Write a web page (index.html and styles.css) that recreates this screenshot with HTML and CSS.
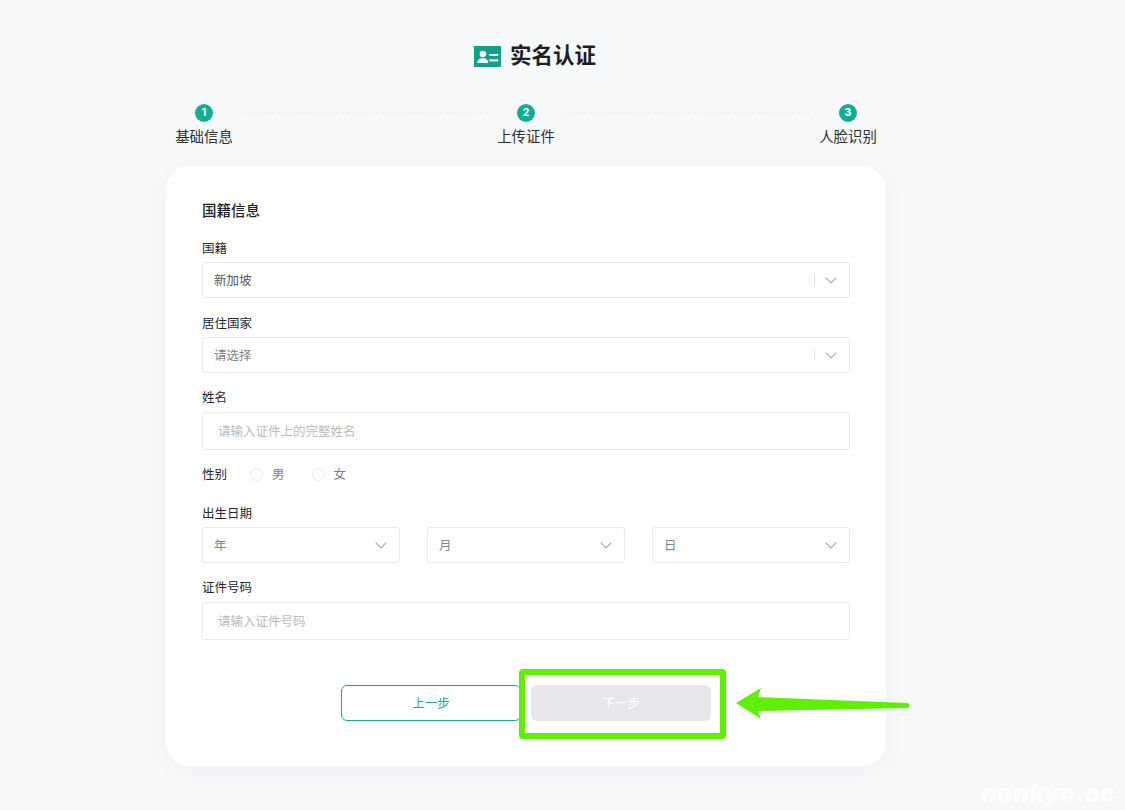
FILE: index.html
```html
<!DOCTYPE html>
<html lang="zh-CN">
<head>
<meta charset="utf-8">
<title>实名认证</title>
<link rel="stylesheet" href="styles.css">
</head>
<body>
<main class="page">
  <header class="heading">
    <svg class="heading-icon" viewBox="0 0 27 21" aria-hidden="true">
      <rect width="27" height="21" fill="#12a08c"/>
      <circle cx="8.8" cy="8" r="3.2" fill="#fff"/>
      <path d="M3.4 17c0-3.2 2.3-4.7 5.4-4.7s5.4 1.5 5.4 4.7z" fill="#fff"/>
      <rect x="15.4" y="8" width="8.8" height="2" fill="#fff"/>
      <rect x="15.4" y="13.4" width="8.8" height="2" fill="#fff"/>
    </svg>
    <h1 class="heading-text">实名认证</h1>
  </header>

  <ol class="steps">
    <li class="step"><span class="step-dot">1</span><span class="step-label">基础信息</span></li>
    <li class="step-line"></li>
    <li class="step"><span class="step-dot">2</span><span class="step-label">上传证件</span></li>
    <li class="step-line"></li>
    <li class="step"><span class="step-dot">3</span><span class="step-label">人脸识别</span></li>
  </ol>

  <section class="card">
    <h2 class="card-title">国籍信息</h2>

    <div class="field">
      <div class="label">国籍</div>
      <div class="control select"><span class="value">新加坡</span><span class="sep"></span><svg class="chev" viewBox="0 0 12 7"><path d="M.7.7 6 6 11.3.7"/></svg></div>
    </div>

    <div class="field field-s">
      <div class="label">居住国家</div>
      <div class="control select"><span class="value muted">请选择</span><span class="sep"></span><svg class="chev" viewBox="0 0 12 7"><path d="M.7.7 6 6 11.3.7"/></svg></div>
    </div>

    <div class="field field-m">
      <div class="label label-far">姓名</div>
      <div class="control input">请输入证件上的完整姓名</div>
    </div>

    <div class="gender">
      <span class="gender-label">性别</span>
      <span class="radio"></span><span class="radio-text">男</span>
      <span class="radio radio-2"></span><span class="radio-text">女</span>
    </div>

    <div class="field field-l">
      <div class="label">出生日期</div>
      <div class="dates">
        <div class="control select date"><span class="value muted">年</span><svg class="chev" viewBox="0 0 12 7"><path d="M.7.7 6 6 11.3.7"/></svg></div>
        <div class="control select date"><span class="value muted">月</span><svg class="chev" viewBox="0 0 12 7"><path d="M.7.7 6 6 11.3.7"/></svg></div>
        <div class="control select date"><span class="value muted">日</span><svg class="chev" viewBox="0 0 12 7"><path d="M.7.7 6 6 11.3.7"/></svg></div>
      </div>
    </div>

    <div class="field field-m">
      <div class="label label-far">证件号码</div>
      <div class="control input">请输入证件号码</div>
    </div>

    <div class="actions">
      <button class="btn btn-prev" type="button">上一步</button>
      <button class="btn btn-next" type="button">下一步</button>
    </div>
  </section>
</main>

<div class="mark-box"></div>
<svg class="mark-arrow" viewBox="0 0 175 32" aria-hidden="true">
  <path d="M0 15 25 0 22 9 171 15a2.5 2.5 0 0 1 0 5L22 23 25 31z" fill="#5ff000"/>
</svg>
<div class="watermark">nonkyc.cc</div>
</body>
</html>
```
FILE: styles.css
```css
* { box-sizing: border-box; }

html, body { margin: 0; padding: 0; height: 100%; }

body {
  background: #f7f8fa;
  color: #1f2329;
  font-family: "Noto Sans CJK SC", "Noto Sans", sans-serif;
  overflow: hidden;
  position: relative;
}

.page {
  width: 720px;
  margin-left: 166px;
  padding-top: 42px;
}

.heading {
  display: flex;
  align-items: center;
  justify-content: center;
  gap: 9px;
  height: 24px;
  margin-left: 18px;
}
.heading-icon { width: 27px; height: 21px; display: block; margin-top: 4px; }
.heading-text {
  margin: 0;
  font-size: 21.5px;
  line-height: 24px;
  font-weight: 700;
  color: #1c1f23;
}

.steps {
  list-style: none;
  margin: 38px 9px 0;
  padding: 0;
  display: flex;
  align-items: flex-start;
}
.step {
  display: flex;
  flex-direction: column;
  align-items: center;
  width: 58px;
  flex: none;
}
.step-dot {
  width: 18px;
  height: 18px;
  border-radius: 50%;
  background: #12ad93;
  color: #fff;
  font-family: "Inter", sans-serif;
  font-size: 10.5px;
  font-weight: 700;
  line-height: 18px;
  text-align: center;
}
.step-label {
  margin-top: 4px;
  font-size: 14.4px;
  line-height: 20px;
  white-space: nowrap;
  color: #2b2f36;
}
.step-line {
  flex: 1;
  margin: 9px 9px 0;
  border-top: 1px dashed #e9ebee;
}

.card {
  height: 600px;
  margin-top: 20px;
  padding: 34px 36px 0;
  background: #fff;
  border-radius: 24px;
  box-shadow: 0 6px 24px rgba(30, 40, 60, 0.03);
}
.card-title {
  margin: 0 0 18px;
  font-size: 14.5px;
  line-height: 20px;
  font-weight: 500;
  color: #1c1f23;
}

.field-s { margin-top: 15px; }
.field-m { margin-top: 14px; }
.field-l { margin-top: 19px; }

.label {
  font-size: 12.5px;
  line-height: 20px;
  margin-bottom: 4px;
  color: #24272c;
}
.label-far { margin-bottom: 5px; }

.control {
  display: flex;
  align-items: center;
  background: #fff;
  border: 1px solid #e7e9ec;
  border-radius: 3px;
  font-size: 12.5px;
}
.select { height: 36px; padding: 0 12px 0 11px; }
.input { height: 38px; padding: 0 15px 2px; color: #b9bcc2; }

.value { flex: 1; color: #555a61; padding-bottom: 2px; }
.value.muted { color: #7f838a; }

.sep { width: 1px; height: 12px; background: #e1e3e6; margin-right: 10px; }
.chev { width: 12px; height: 7px; display: block; fill: none; stroke: #a9adb3; stroke-width: 1.2; }

.gender {
  display: flex;
  align-items: center;
  height: 20px;
  margin-top: 14px;
  font-size: 12.5px;
  line-height: 20px;
}
.gender-label { width: 48px; color: #24272c; }
.radio {
  width: 13px;
  height: 13px;
  border: 1px solid #e7e9ec;
  border-radius: 50%;
  margin-right: 9px;
}
.radio-text { color: #7a7e85; }
.radio-2 { margin-left: 27px; }

.dates { display: grid; grid-template-columns: repeat(3, 198px); gap: 27px; }

.actions {
  display: flex;
  justify-content: center;
  gap: 10px;
  margin-top: 45px;
}
.btn {
  width: 180px;
  height: 36px;
  padding: 0 0 2px;
  border-radius: 6px;
  font: inherit;
  font-size: 12.5px;
}
.btn-prev { background: #fff; border: 1px solid #12ad93; color: #12ad93; }
.btn-next { background: #e6e7ea; border: 0; color: #fff; }

/* Annotation overlay drawn on top of the screenshot */
.mark-box {
  position: absolute;
  left: 519px;
  top: 669px;
  width: 207px;
  height: 70px;
  border: 6px solid #5ff000;
  border-radius: 4px;
}
.mark-arrow {
  position: absolute;
  left: 736px;
  top: 688px;
  width: 175px;
  height: 32px;
}
.watermark {
  position: absolute;
  left: 981px;
  top: 778px;
  font-family: "Inter", sans-serif;
  font-size: 25px;
  line-height: 30px;
  font-weight: 900;
  font-style: italic;
  letter-spacing: 0;
  color: rgba(255, 255, 255, 0.8);
  -webkit-text-stroke: 0.5px rgba(255, 255, 255, 0.8);
  white-space: nowrap;
}
```
